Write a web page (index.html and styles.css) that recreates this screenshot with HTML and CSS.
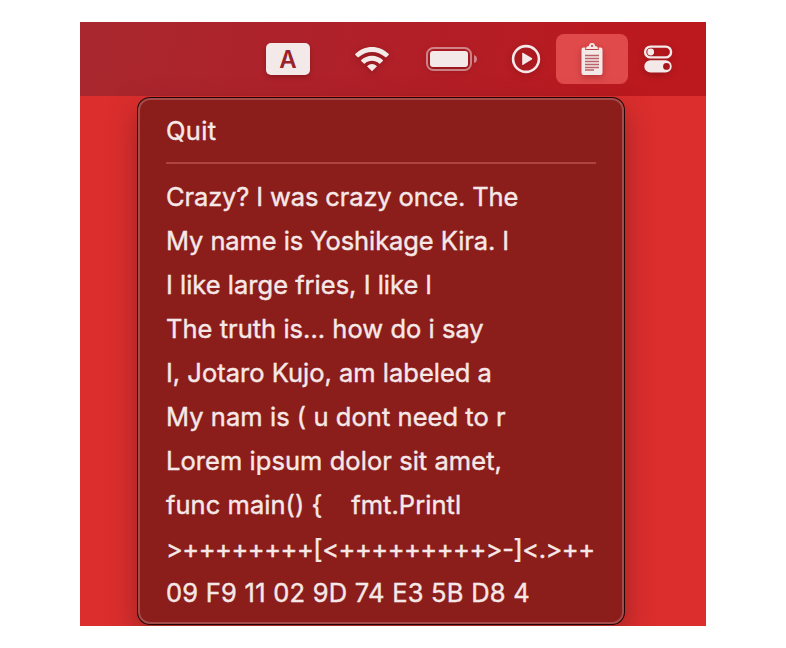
FILE: index.html
```html
<!DOCTYPE html>
<html lang="en">
<head>
<meta charset="utf-8">
<title>Clipboard menu</title>
<link rel="stylesheet" href="styles.css">
</head>
<body>
<main class="desktop">
  <header class="menubar">
    <div class="input-source">A</div>
    <svg class="icon wifi" width="36" height="28" viewBox="0 0 36 28">
      <path d="M1.200 9C10.500-.5 25.500-.5 34.800 9Q35 9.500 34.600 10L32.300 12.200Q31.700 12.500 31.200 12.100C23.700 5.200 12.300 5.200 4.800 12.100Q4.300 12.500 3.700 12.200L1.400 10Q1 9.500 1.200 9Z"/>
      <path d="M7 15.200C13 9.200 23 9.200 29 15.200Q29.200 15.700 28.800 16.100L26.200 18.500Q25.700 18.800 25.200 18.400C21.200 14.700 14.800 14.700 10.800 18.400Q10.300 18.800 9.800 18.500L7.200 16.100Q6.800 15.700 7 15.200Z"/>
      <path d="M13 21.200Q18 16.700 23 21.200L18 26.300Z"/>
    </svg>
    <svg class="icon battery" width="52" height="24" viewBox="0 0 52 24">
      <rect class="battery-shell" x="1" y="1" width="44" height="22" rx="6.500"/>
      <rect x="4" y="4" width="38" height="16" rx="3"/>
      <path class="battery-tip" d="M48 8Q51 9 51 12T48 16Z"/>
    </svg>
    <svg class="icon play" width="30" height="30" viewBox="0 0 30 30">
      <circle class="line" cx="15" cy="15" r="12.900"/>
      <path d="M11.200 9.300Q11.200 8.300 12.300 8.900L20.800 14.100Q21.800 14.900 20.800 15.600L12.300 20.700Q11.200 21.300 11.200 20.400Z"/>
    </svg>
    <div class="active-item">
      <svg class="icon" width="22" height="34" viewBox="0 0 22 34">
        <path d="M2.500 5.500H4.200V8H17.800V5.500H19.500Q21.500 5.500 21.500 7.500V31Q21.500 33 19.500 33H2.500Q.5 33 .5 31V7.500Q.5 5.500 2.500 5.500Z"/>
        <path fill-rule="evenodd" d="M5 7Q5 4 8 4Q8 1 11 1T14 4Q17 4 17 7ZM11 2.800A1.100 1.100 0 1 0 11 5A1.100 1.100 0 1 0 11 2.800Z"/>
        <path class="note-lines" d="M4 13.500H18M4 16.500H18M4 19.500H18M4 22.500H18M4 25.500H18M4 28H13"/>
      </svg>
    </div>
    <svg class="icon controls" width="30" height="28" viewBox="0 0 30 28">
      <rect class="toggle-line" x="2.100" y="1.600" width="26" height="10.800" rx="5.400"/>
      <circle cx="7.700" cy="7" r="3.400"/>
      <path fill-rule="evenodd" d="M7.500 15.200H22.500A6.200 6.200 0 0 1 22.500 27.600H7.500A6.200 6.200 0 0 1 7.500 15.200ZM23.500 18A3.400 3.400 0 1 0 23.500 24.800A3.400 3.400 0 1 0 23.500 18Z"/>
    </svg>
  </header>
  <section class="menu">
    <div class="item quit">Quit</div>
    <hr class="separator">
    <div class="item t1">Crazy? I was crazy once. The</div>
    <div class="item t2">My name is Yoshikage Kira. I</div>
    <div class="item t3">I like large fries, I like l</div>
    <div class="item t4">The truth is... how do i say</div>
    <div class="item t5">I, Jotaro Kujo, am labeled a</div>
    <div class="item t6">My nam is ( u dont need to r</div>
    <div class="item t7">Lorem ipsum dolor sit amet,</div>
    <div class="item t8">func main() {    fmt.Printl</div>
    <div class="item t9">&gt;++++++++[&lt;+++++++++&gt;-]&lt;.&gt;++</div>
    <div class="item t10">09 F9 11 02 9D 74 E3 5B D8 4</div>
  </section>
</main>
</body>
</html>
```
FILE: styles.css
```css
* { box-sizing: border-box; }
body {
  margin: 0;
  padding: 22px 80px;
  background: #fff;
  font-family: Inter, "Liberation Sans", sans-serif;
}
.desktop {
  width: 626px;
  height: 604px;
  overflow: hidden;
  background: #db2e2d;
}
.menubar {
  display: flex;
  align-items: center;
  height: 74px;
  padding-left: 186px;
  background: linear-gradient(100deg, #a9282f, #b02029 45%, #bb191e 90%);
}
.icon {
  display: block;
  flex: none;
  fill: #f4e9e9;
  filter: drop-shadow(0 2px 3px rgba(60, 0, 0, .3));
}
.input-source {
  width: 44px;
  height: 32px;
  border-radius: 5px;
  background: #f4e9e9;
  color: #98232a;
  font-size: 24px;
  font-weight: 600;
  line-height: 34px;
  text-align: center;
  box-shadow: 0 2px 5px rgba(60, 0, 0, .3);
}
.wifi { margin-left: 44px; }
.battery { margin-left: 36px; }
.battery-shell { fill: none; stroke: #f4e9e9; stroke-opacity: .5; stroke-width: 2; }
.battery-tip { fill-opacity: .5; }
.play { margin-left: 33px; }
.line { fill: none; stroke: #f4e9e9; stroke-width: 2.600; }
.active-item {
  display: flex;
  align-items: center;
  justify-content: center;
  width: 72px;
  height: 50px;
  margin-left: 15px;
  border-radius: 8px;
  background: #e04a4b;
}
.note-lines { stroke: #b86468; stroke-width: 1.300; }
.controls { margin-left: 15px; }
.toggle-line { fill: none; stroke: #f4e9e9; stroke-width: 2.400; }
.menu {
  position: relative;
  width: 486px;
  height: 526px;
  margin: 2px 0 0 58px;
  padding: 9px 26px;
  border: 2px solid #a44c49;
  border-radius: 12px;
  background: #8b1d1b;
  box-shadow: 0 0 0 1px #220606, 0 12px 28px rgba(90, 25, 25, .5);
}
.item {
  height: 44px;
  color: #f5e8e7;
  font-size: 25.500px;
  line-height: 44px;
  white-space: pre;
  font-feature-settings: "calt" 0;
  -webkit-text-stroke: .4px #f5e8e7;
}
.quit { letter-spacing: .3px; }
.t1 { letter-spacing: -.13px; }
.t2 { letter-spacing: -.09px; }
.t3 { letter-spacing: 0; }
.t4 { letter-spacing: .02px; }
.t5 { letter-spacing: 0; }
.t6 { letter-spacing: .05px; }
.t7 { letter-spacing: .05px; }
.t8 { letter-spacing: .04px; }
.t9 { letter-spacing: -.5px; }
.t10 { letter-spacing: .24px; }
.separator {
  height: 2px;
  margin: 9px 0 11px;
  border: 0;
  background: #ad4441;
}
```
